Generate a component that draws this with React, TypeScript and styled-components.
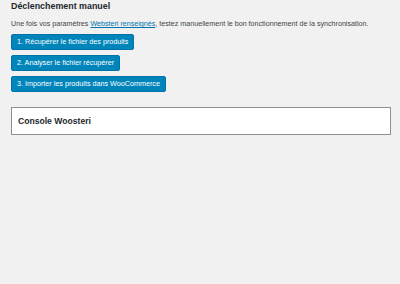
import React from "react";
import styled, { createGlobalStyle } from "styled-components";

const Global = createGlobalStyle`
  html, body { margin: 0; padding: 0; background: #f1f1f1; }
  body { font-family: "Liberation Sans", Arial, sans-serif; color: #444; }
`;

const Page = styled.div`
  width: 400px;
  height: 284px;
  box-sizing: border-box;
  padding: 0 9px 0 11px;
  background: #f1f1f1;
`;

const Title = styled.h2`
  margin: 0;
  padding-top: 1px;
  font-size: 8.9px;
  line-height: 10px;
  font-weight: 700;
  color: #23282d;
`;

const Intro = styled.p`
  margin: 9px 0 0;
  font-size: 7.15px;
  line-height: 9px;
  color: #444;
`;

const Link = styled.a`
  color: #0073aa;
  text-decoration: underline;
`;

const Buttons = styled.div`
  display: flex;
  flex-direction: column;
  align-items: flex-start;
  gap: 5px;
  margin-top: 5px;
`;

const Button = styled.button`
  height: 16px;
  padding: 0 5px;
  border: 1px solid #0073aa;
  border-radius: 2px;
  background: #0085ba;
  color: #fff;
  font-family: "Liberation Sans", Arial, sans-serif;
  font-size: 7.2px;
  line-height: 14px;
  cursor: pointer;
`;

const Console = styled.div`
  margin-top: 15px;
  height: 28px;
  box-sizing: border-box;
  border: 1px solid #8c8f94;
  background: #fff;
  display: flex;
  align-items: center;
  padding-left: 6px;
`;

const ConsoleTitle = styled.h3`
  margin: 0;
  font-size: 8.6px;
  font-weight: 700;
  color: #23282d;
`;

export default function App() {
  return (
    <>
      <Global />
      <Page>
        <Title>Déclenchement manuel</Title>
        <Intro>
          Une fois vos paramètres <Link href="#">Websteri renseignés</Link>, testez manuellement le bon fonctionnement de la synchronisation.
        </Intro>
        <Buttons>
          <Button>1. Récupérer le fichier des produits</Button>
          <Button>2. Analyser le fichier récupérer</Button>
          <Button>3. Importer les produits dans WooCommerce</Button>
        </Buttons>
        <Console>
          <ConsoleTitle>Console Woosteri</ConsoleTitle>
        </Console>
      </Page>
    </>
  );
}
